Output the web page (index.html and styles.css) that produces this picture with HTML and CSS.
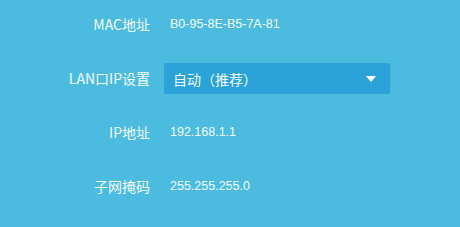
FILE: index.html
```html
<!DOCTYPE html>
<html lang="zh-CN">
<head>
    <meta charset="UTF-8">
    <title>LAN口设置</title>
    <link rel="stylesheet" href="styles.css">
</head>
<body>
    <div class="lan-form">
        <div class="form-row">
            <label class="row-label">MAC地址</label>
            <span class="row-value">B0-95-8E-B5-7A-81</span>
        </div>
        <div class="form-row">
            <label class="row-label">LAN口IP设置</label>
            <div class="select-box">
                <span class="select-text">自动（推荐）</span>
                <span class="select-arrow"></span>
            </div>
        </div>
        <div class="form-row">
            <label class="row-label">IP地址</label>
            <span class="row-value">192.168.1.1</span>
        </div>
        <div class="form-row">
            <label class="row-label">子网掩码</label>
            <span class="row-value">255.255.255.0</span>
        </div>
    </div>
</body>
</html>
```

FILE: styles.css
```css
body {
    margin: 0;
    background-color: #4bbce0;
    font-family: "Noto Sans CJK SC", "Noto Sans", sans-serif;
    color: #f4fbfe;
}
.lan-form {
    display: flex;
    flex-direction: column;
    gap: 22px;
    padding-top: 8px;
}
.form-row {
    display: grid;
    grid-template-columns: 150px 226px;
    column-gap: 14px;
    align-items: center;
    height: 32px;
}
.row-label {
    text-align: right;
    font-size: 14px;
}
.row-value {
    padding-left: 6px;
    font-family: "Liberation Sans", Arial, sans-serif;
    font-size: 12.5px;
}
.select-box {
    display: flex;
    align-items: center;
    justify-content: space-between;
    height: 31px;
    margin-top: 1px;
    padding: 0 14px 0 9px;
    background-color: #2ba3d8;
    border-radius: 2px;
}
.select-text {
    font-size: 14px;
}
.select-arrow {
    width: 0;
    height: 0;
    border-left: 5px solid transparent;
    border-right: 5px solid transparent;
    border-top: 6px solid #ffffff;
}
```
